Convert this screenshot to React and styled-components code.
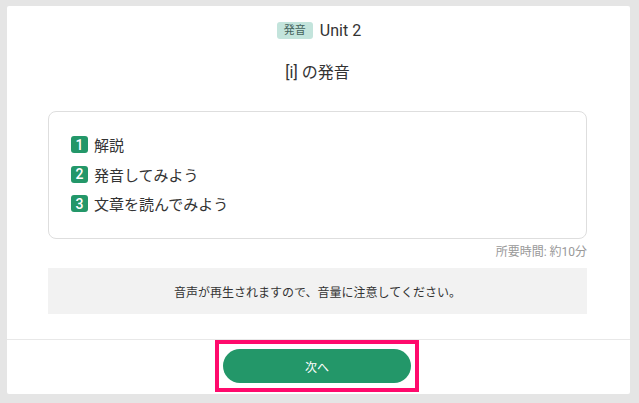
import React from "react";
import styled, { createGlobalStyle } from "styled-components";

const Global = createGlobalStyle`
  html, body { margin: 0; padding: 0; background: #e5e5e5; }
  body { font-family: Roboto, "Noto Sans CJK JP", sans-serif; color: #333; }
`;

const Page = styled.div`
  width: 639px;
  height: 403px;
  padding: 6px 9px 9px 7px;
  box-sizing: border-box;
`;

const Card = styled.div`
  width: 623px;
  height: 388px;
  background: #fff;
  border-radius: 2px;
  display: flex;
  flex-direction: column;
`;

const Body = styled.div`
  padding: 16px 43px 25px 41px;
  display: flex;
  flex-direction: column;
  align-items: stretch;
`;

const UnitRow = styled.div`
  display: flex;
  justify-content: center;
  align-items: center;
  gap: 7px;
  height: 17px;
  padding-left: 3px;
`;

const Tag = styled.span`
  display: inline-flex;
  align-items: center;
  justify-content: center;
  height: 17px;
  padding: 0 7px;
  border-radius: 3px;
  background: #c3e4dc;
  color: #44625b;
  font-size: 11px;
  line-height: 17px;
`;

const UnitText = styled.span`
  font-size: 16px;
  line-height: 17px;
  color: #333;
`;

const Title = styled.h1`
  margin: 22px 0 0;
  font-size: 16px;
  font-weight: 400;
  line-height: 24px;
  text-align: center;
  color: #333;
`;

const StepBox = styled.ol`
  list-style: none;
  margin: 26px 0 0;
  padding: 18px 22px 0;
  border: 1px solid #dedede;
  border-radius: 8px;
  height: 128px;
  box-sizing: border-box;
`;

const Step = styled.li`
  display: flex;
  align-items: center;
  height: 29.5px;
  font-size: 15px;
  color: #333;
`;

const Num = styled.span`
  display: inline-flex;
  align-items: center;
  justify-content: center;
  width: 17px;
  height: 17px;
  border-radius: 3px;
  background: #239769;
  color: #fff;
  font-size: 14px;
  font-family: Roboto, "Liberation Sans", sans-serif;
  font-weight: 500;
  margin-right: 6px;
`;

const Duration = styled.div`
  margin-top: 5px;
  height: 16px;
  line-height: 16px;
  font-size: 12px;
  color: #999;
  text-align: right;
`;

const Notice = styled.div`
  margin-top: 8px;
  height: 46px;
  background: #f2f2f2;
  display: flex;
  align-items: center;
  justify-content: center;
  font-size: 12px;
  color: #333;
`;

const Footer = styled.div`
  border-top: 1px solid #e8e8e8;
  display: flex;
  justify-content: center;
  padding-right: 3px;
`;

const Highlight = styled.div`
  border: 4px solid #ff0a6c;
  padding: 5px 4px;
`;

const NextButton = styled.button`
  display: block;
  width: 188px;
  height: 34px;
  border: none;
  border-radius: 17px;
  background: #239769;
  color: #fff;
  font-family: Roboto, "Noto Sans CJK JP", sans-serif;
  font-size: 12px;
  cursor: pointer;
`;

const steps = ["解説", "発音してみよう", "文章を読んでみよう"];

export default function App() {
  return (
    <>
      <Global />
      <Page>
        <Card>
          <Body>
            <UnitRow>
              <Tag>発音</Tag>
              <UnitText>Unit 2</UnitText>
            </UnitRow>
            <Title>[i] の発音</Title>
            <StepBox>
              {steps.map((s, i) => (
                <Step key={s}>
                  <Num>{i + 1}</Num>
                  {s}
                </Step>
              ))}
            </StepBox>
            <Duration>所要時間: 約10分</Duration>
            <Notice>音声が再生されますので、音量に注意してください。</Notice>
          </Body>
          <Footer>
            <Highlight>
              <NextButton>次へ</NextButton>
            </Highlight>
          </Footer>
        </Card>
      </Page>
    </>
  );
}
